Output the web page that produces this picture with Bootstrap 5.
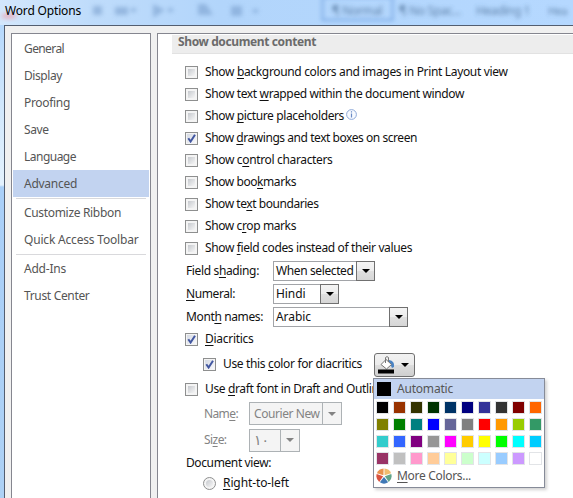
<!DOCTYPE html>
<html lang="en">
<head>
<meta charset="utf-8">
<meta name="viewport" content="width=device-width, initial-scale=1">
<title>Word Options</title>
<link href="https://cdn.jsdelivr.net/npm/bootstrap@5.3.0/dist/css/bootstrap.min.css" rel="stylesheet">
<style>
body{font:12px/18px "Noto Sans","Open Sans","DejaVu Sans",sans-serif;letter-spacing:-.4px;color:#111;background:#b5d8ff;width:573px;height:498px;overflow:hidden}
u{text-decoration:underline;text-underline-offset:2px;text-decoration-thickness:1px;text-decoration-skip-ink:none}
.titlebar{height:25px;padding-left:5px;background:linear-gradient(90deg,#d3e7fc,#bfdcfb 90px,#b2d5fb 220px,#b5d8ff)}
.titlebar .caption{line-height:22px;color:#000}
.ghosts{left:0;top:0;width:573px;height:25px}
.edge{width:4px;background:linear-gradient(#b5d8fc,#d0e7fc 80px,#e4f2fe 160px,#a9cff8 162px,#add1f5)}
.dialog{background:#f0f0f0;border-left:1px solid #535e70;border-top:1px solid #535e70;padding:7px 0 0 6px}
.side{width:140px;border:1px solid #85868f;border-bottom:0;padding:1px;margin-right:6px;color:#555}
.side .item{height:27px;line-height:28px;padding-left:11px;white-space:nowrap}
.side .item.sel{background:#c2d3f0}
.side .rule{height:1px;background:#d9d9dc;margin:1px 3px 0}
.pane{border-left:1px solid #85868f;border-top:1px solid #85868f;padding:1px 0 0 14px;overflow:hidden}
.heading{height:19px;background:#ededed;border-bottom:1px solid #e2e2e2;line-height:13px;padding-left:6px;color:#6b6b6b;font-weight:700;margin-bottom:7px}
.opt{height:22px;padding-left:13px;white-space:nowrap}
.boxy{width:13px;height:13px;flex:none;border:1px solid #8e8f8f;background:linear-gradient(135deg,#c6c9ce,#f6f6f6) content-box,#f4f4f4;padding:2px;margin-right:7px}
.ticked{background:linear-gradient(135deg,#d5dae3,#f8f8fb) content-box,#f4f4f4;padding:1px}
.boxy svg{display:block;width:9px;height:9px;overflow:visible}
.dot{border-radius:50%}
.line{height:23px;padding-left:14px}
.line .tag{width:87px;white-space:nowrap}
.pick{height:20px;border:1px solid #a2a4a8;background:#fff;padding-left:2px;white-space:nowrap}
.w-a{width:102px}.w-b{width:66px}.w-c{width:135px}.w-d{width:93px}.w-e{width:51px}
.pick .arrow{width:19px;height:20px;margin:-1px -1px -1px 0;border:1px solid #707070;background:linear-gradient(#f4f4f4,#ececec 50%,#dfdfdf 51%,#d6d6d6)}
.arrow::after,.tri{content:"";border:4px solid transparent;border-top-color:#000;border-bottom:0;width:0;height:0}
.off{color:#838383;height:26px;padding-left:32px}
.off .tag{width:45px}
.off .pick{height:23px;border:1px solid #adb2b5;background:#f4f4f4;padding-left:4px}
.off .arrow{height:23px;width:20px;border-color:#adb2b5;background:#f4f4f4}
.off .arrow::after{border-top-color:#838383}
.off bdi{font:14px/18px "DejaVu Sans",sans-serif}
.first{height:27px}
.view{height:20px}
.inner{padding-left:31px}
.tall{height:28px}
.colorbtn{width:41px;height:24px;border:1px solid #707070;border-radius:3px;background:linear-gradient(#f2f2f2,#ebebeb 50%,#dddddd 51%,#cfcfcf);padding:0 5px 0 3px;margin-left:12px;margin-top:2px}
.menu{left:373px;top:378px;width:172px;height:110px;border:1px solid #868b98;background:#fff;color:#555;box-shadow:2px 2px 3px rgba(0,0,0,.18)}
.auto{height:20px;background:#c2d3f0;padding-left:3px}
.auto i{width:14px;height:14px;background:#000;margin-right:6px}
.swatches{display:grid;grid-template-columns:repeat(10,13px);gap:4px;padding:2px 2px 0}
.swatches i{height:13px;border:1px solid #e2e4e7}
.more{padding-left:2px;height:21px}
.more svg{margin-right:5px}
</style>
<script src="https://cdn.jsdelivr.net/npm/bootstrap@5.3.0/dist/js/bootstrap.bundle.min.js"></script>
</head>
<body class="d-flex flex-column position-relative">
<svg width="0" height="0" class="position-absolute"><symbol id="tick" viewBox="0 0 9 9"><path d="M1.300 4.200 3.600 7.500 8 .8" fill="none" stroke="#4257a0" stroke-width="2"/></symbol></svg>
<header class="titlebar flex-shrink-0 position-relative">
<svg class="ghosts position-absolute" viewBox="0 0 573 25">
<defs><filter id="soft" x="-50%" y="-50%" width="200%" height="200%"><feGaussianBlur stdDeviation="2.300"/></filter></defs>
<ellipse cx="9" cy="16" rx="8" ry="3" fill="#e9a9b8" opacity=".8" filter="url(#soft)"/>
<g filter="url(#soft)" fill="#6e94c4" opacity=".5"><rect x="93" y="6" width="9" height="9"/><rect x="115" y="7" width="13" height="8"/><rect x="131" y="8" width="5" height="4"/><path d="M153 4l12 6-12 8zM198 4h8l7 11h-15zM231 6h11v10h-11zM168 8h5v4h-5zM253 9h5v4h-5z"/></g>
<rect x="322.500" y="-3" width="70" height="23" fill="none" stroke="#7aa9e4" stroke-width="2" filter="url(#soft)"/>
<g filter="url(#soft)" fill="#44678f" opacity=".75" font-size="12"><text x="332" y="15">¶ Normal</text><text x="399" y="15">¶ No Spac...</text><text x="476" y="15">Heading 1</text><text x="548" y="15" font-size="11">Hea</text></g>
</svg>
<div class="caption position-relative"><span data-w="76">Word Options</span></div>
</header>
<div class="d-flex flex-grow-1">
<div class="edge"></div>
<div class="dialog d-flex flex-grow-1">
<nav class="side bg-white flex-shrink-0">
<div class="item"><span data-w="40">General</span></div>
<div class="item"><span data-w="38">Display</span></div>
<div class="item"><span data-w="46">Proofing</span></div>
<div class="item"><span data-w="24.5">Save</span></div>
<div class="item"><span data-w="52">Language</span></div>
<div class="item sel"><span data-w="53">Advanced</span></div>
<div class="rule"></div>
<div class="item"><span data-w="97">Customize Ribbon</span></div>
<div class="item"><span data-w="114.5">Quick Access Toolbar</span></div>
<div class="rule"></div>
<div class="item"><span data-w="42">Add-Ins</span></div>
<div class="item"><span data-w="65.5">Trust Center</span></div>
</nav>
<main class="pane bg-white flex-grow-1">
<div class="heading"><span data-w="138">Show document content</span></div>
<div class="opt d-flex align-items-center"><i class="boxy"></i><span data-w="302.5">Show <u>b</u>ackground colors and images in Print Layout view</span></div>
<div class="opt d-flex align-items-center"><i class="boxy"></i><span data-w="259">Show text <u>w</u>rapped within the document window</span></div>
<div class="opt d-flex align-items-center"><i class="boxy"></i><span data-w="139">Show <u>p</u>icture placeholders</span><svg class="mb-1" width="15" height="11" viewBox="-2 0 15 11"><circle cx="5.500" cy="5.500" r="4.900" fill="#f7faff" stroke="#8ea9d8"/><path d="M5.500 2.300v1.300M5.500 4.600v4" stroke="#6a8ac5" stroke-width="1.200"/></svg></div>
<div class="opt d-flex align-items-center"><i class="boxy ticked"><svg><use href="#tick"/></svg></i><span data-w="212">Show <u>d</u>rawings and text boxes on screen</span></div>
<div class="opt d-flex align-items-center"><i class="boxy"></i><span data-w="127.5">Show c<u>o</u>ntrol characters</span></div>
<div class="opt d-flex align-items-center"><i class="boxy"></i><span data-w="91">Show boo<u>k</u>marks</span></div>
<div class="opt d-flex align-items-center"><i class="boxy"></i><span data-w="113.5">Show te<u>x</u>t boundaries</span></div>
<div class="opt d-flex align-items-center"><i class="boxy"></i><span data-w="91">Show c<u>r</u>op marks</span></div>
<div class="opt d-flex align-items-center"><i class="boxy"></i><span data-w="207">Show <u>f</u>ield codes instead of their values</span></div>
<div class="line d-flex align-items-center"><div class="tag"><span data-w="73">Field s<u>h</u>ading:</span></div><div class="pick w-a d-flex justify-content-between align-items-center"><span data-w="77.5">When selected</span><b class="arrow d-flex align-items-center justify-content-center"></b></div></div>
<div class="line d-flex align-items-center"><div class="tag"><span data-w="49"><u>N</u>umeral:</span></div><div class="pick w-b d-flex justify-content-between align-items-center"><span data-w="29.5">Hindi</span><b class="arrow d-flex align-items-center justify-content-center"></b></div></div>
<div class="line d-flex align-items-center"><div class="tag"><span data-w="77">Mont<u>h</u> names:</span></div><div class="pick w-c d-flex justify-content-between align-items-center"><span data-w="35">Arabic</span><b class="arrow d-flex align-items-center justify-content-center"></b></div></div>
<div class="opt d-flex align-items-center"><i class="boxy ticked"><svg><use href="#tick"/></svg></i><span data-w="48.5"><u>D</u>iacritics</span></div>
<div class="opt inner tall d-flex align-items-center"><i class="boxy ticked"><svg><use href="#tick"/></svg></i><span data-w="139">Use this <u>c</u>olor for diacritics</span>
<div class="colorbtn d-flex align-items-center justify-content-between"><svg width="18" height="20" viewBox="0 0 18 20"><path d="M11 5q6 1 5 7l-2 1q-1-4-4-7" fill="#4a83c3"/><path d="M3 9.500 8 4.500l5.500 5L8.500 14z" fill="#fff" stroke="#777"/><path d="M7.500 8V2.500q1.500-1.800 3 0V7" fill="none" stroke="#777"/><rect x="0" y="14.500" width="16" height="4" fill="#000"/></svg><span class="tri"></span></div></div>
<div class="opt d-flex align-items-center"><i class="boxy"></i><span data-w="180">Use <u>d</u>raft font in Draft and Outline</span></div>
<div class="line off first d-flex align-items-center"><div class="tag"><span data-w="34">Nam<u>e</u>:</span></div><div class="pick w-d d-flex justify-content-between align-items-center"><span data-w="65.5">Courier New</span><b class="arrow d-flex align-items-center justify-content-center"></b></div></div>
<div class="line off d-flex align-items-center"><div class="tag"><span data-w="22.5">Si<u>z</u>e:</span></div><div class="pick w-e d-flex justify-content-between align-items-center"><bdi>١٠</bdi><b class="arrow d-flex align-items-center justify-content-center"></b></div></div>
<div class="line view d-flex align-items-center"><span data-w="85">Document view:</span></div>
<div class="opt view inner d-flex align-items-center"><i class="boxy dot"></i><span data-w="66"><u>R</u>ight-to-left</span></div>
</main>
</div>
</div>
<div class="menu position-absolute">
<div class="auto d-flex align-items-center"><i></i><span data-w="56">Automatic</span></div>
<div class="swatches" id="swatches"></div>
<div class="more d-flex align-items-center"><svg width="16" height="16" viewBox="-8 -8 16 16" id="wheel"></svg><span data-w="74"><u>M</u>ore Colors...</span></div>
</div>
<script>
// palette of the colour menu, row by row
const palette = `000000 993300 333300 003300 003366 000080 333399 333333 800000 ff6600
808000 008000 008080 0000ff 666699 808080 ff0000 ff9900 99cc00 339966
33cccc 3366ff 800080 969696 ff00ff ffcc00 ffff00 00ff00 00ffff 00ccff
993366 c0c0c0 ff99cc ffcc99 ffff99 ccffcc ccffff 99ccff cc99ff ffffff`.split(/\s+/);
document.getElementById('swatches').innerHTML = palette.map(c => `<i style="background:#${c}"></i>`).join('');
// five wedges of the colour wheel, clockwise from the top
document.getElementById('wheel').innerHTML = ['#f0bc6e', '#62a58a', '#3f78b5', '#d9523f', '#e8924e'].map((c, i) => {
  const p = (r, a) => (r * Math.sin(a * Math.PI / 180)).toFixed(2) + ' ' + (-r * Math.cos(a * Math.PI / 180)).toFixed(2);
  const a = i * 72 + 3, b = a + 66;
  return `<path d="M${p(.9, a + 33)}L${p(7.6, a)}A7.600 7.600 0 0 1 ${p(7.6, b)}Z" fill="${c}"/>`;
}).join('');
// tracks each label to its intended width
document.querySelectorAll('[data-w]').forEach(s => {
  s.style.letterSpacing = '0';
  const n = s.textContent.length;
  s.style.letterSpacing = ((+s.dataset.w - s.getBoundingClientRect().width) / n).toFixed(3) + 'px';
});
</script>
</body>
</html>
